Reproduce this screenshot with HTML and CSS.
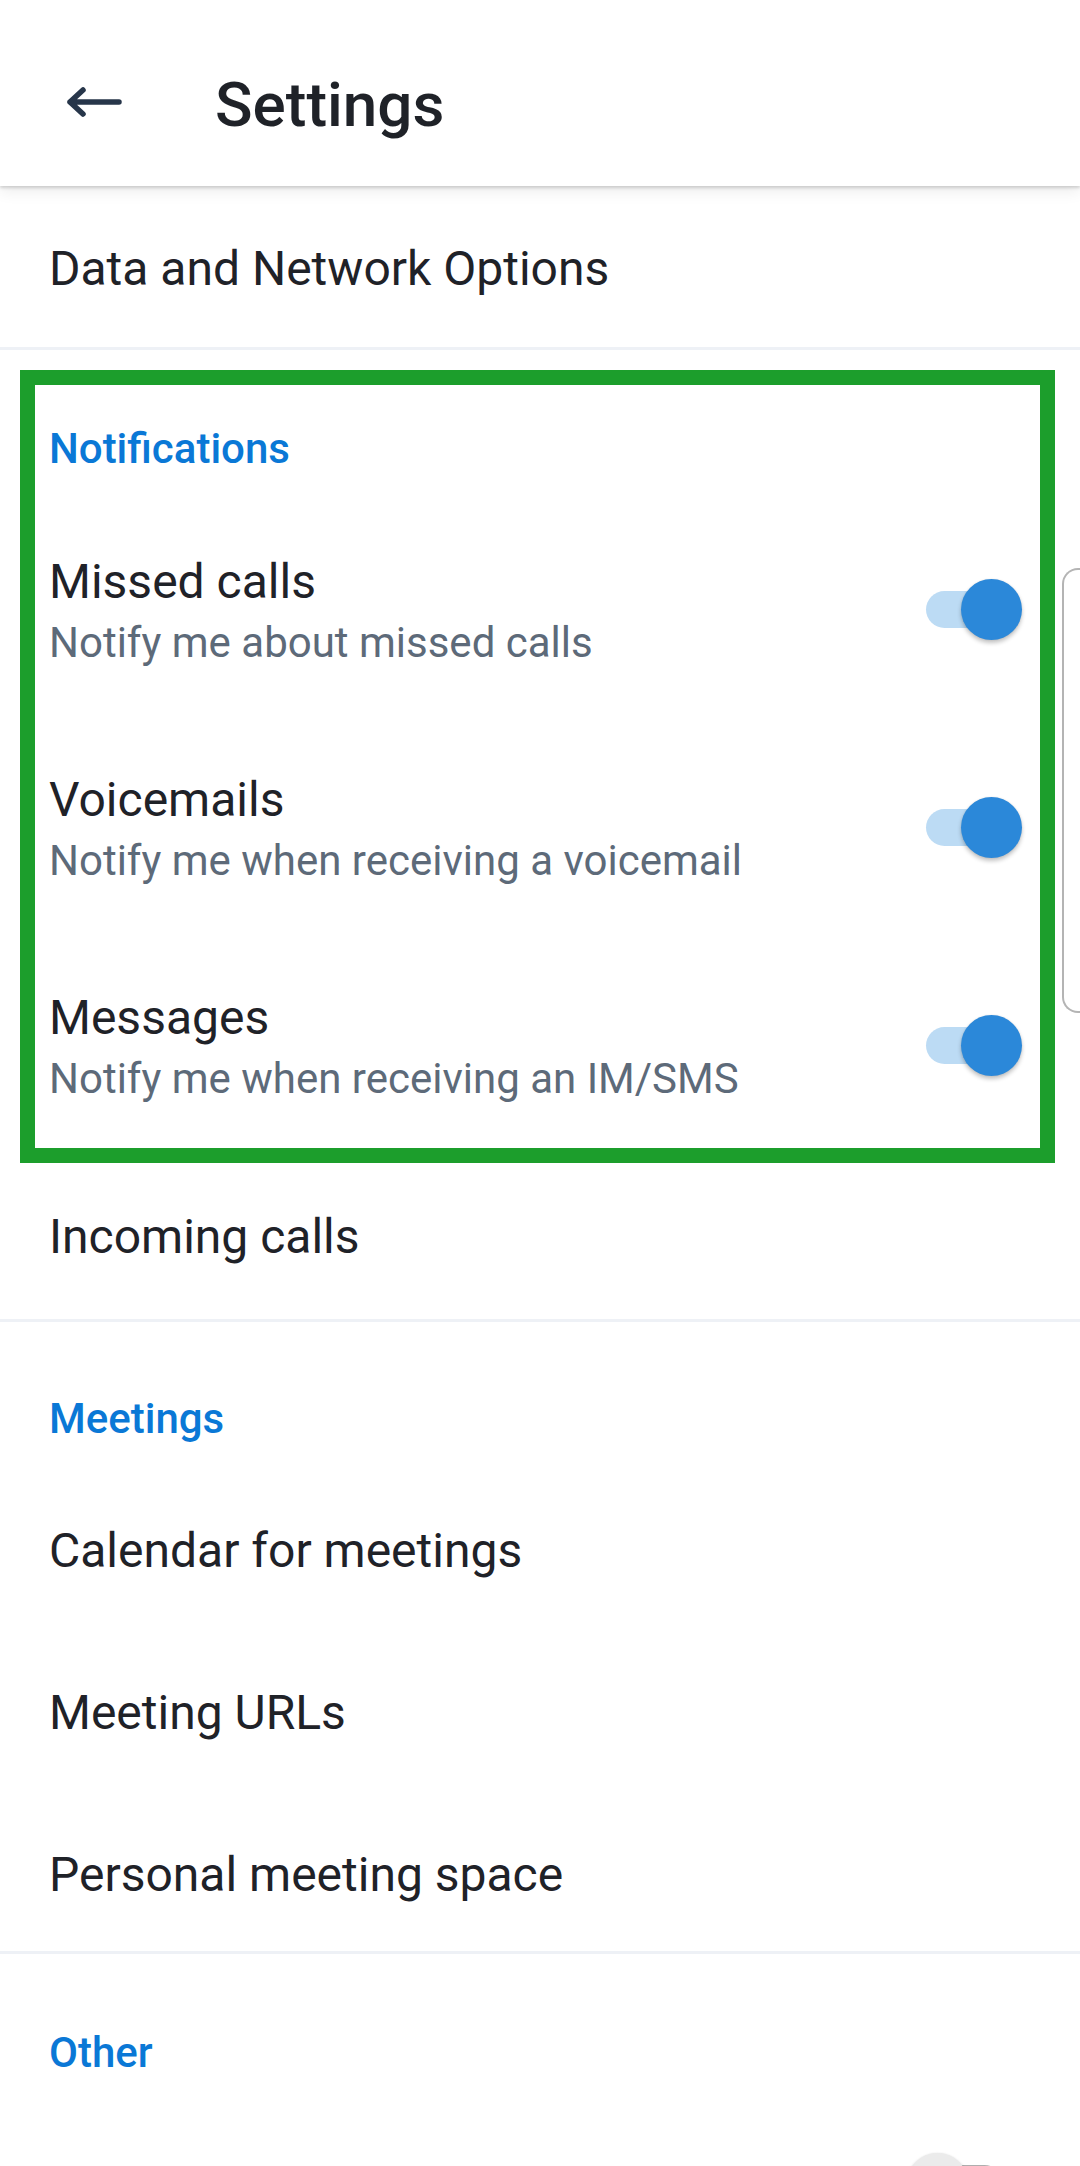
FILE: index.html
```html
<!DOCTYPE html>
<html lang="en">
<head>
<meta charset="utf-8">
<title>Settings</title>
<link rel="stylesheet" href="styles.css">
</head>
<body>
<div class="screen">
  <header class="appbar">
    <svg class="back" width="64" height="40" viewBox="0 0 64 40" aria-hidden="true">
      <path d="M9 20 H58 M22 8 L9 20 L22 32" fill="none" stroke="#27364a" stroke-width="5.5" stroke-linecap="round" stroke-linejoin="round"/>
    </svg>
    <h1 class="title">Settings</h1>
  </header>

  <div class="item item-data divided">Data and Network Options</div>

  <section class="highlight">
    <div class="label label-notif">Notifications</div>
    <div class="toggle-row">
      <div class="texts">
        <div class="t-title">Missed calls</div>
        <div class="t-sub">Notify me about missed calls</div>
      </div>
      <div class="switch on"><span class="track"></span><span class="knob"></span></div>
    </div>
    <div class="toggle-row">
      <div class="texts">
        <div class="t-title">Voicemails</div>
        <div class="t-sub">Notify me when receiving a voicemail</div>
      </div>
      <div class="switch on"><span class="track"></span><span class="knob"></span></div>
    </div>
    <div class="toggle-row last">
      <div class="texts">
        <div class="t-title">Messages</div>
        <div class="t-sub">Notify me when receiving an IM/SMS</div>
      </div>
      <div class="switch on"><span class="track"></span><span class="knob"></span></div>
    </div>
  </section>

  <div class="item item-incoming divided">Incoming calls</div>

  <div class="label label-meet">Meetings</div>
  <div class="item item-list">Calendar for meetings</div>
  <div class="item item-list">Meeting URLs</div>
  <div class="item item-list item-list-last divided">Personal meeting space</div>

  <div class="label label-other">Other</div>
  <div class="bottom-row">
    <div class="switch off"><span class="track"></span><span class="knob"></span></div>
  </div>

  <div class="edge-panel"></div>
</div>
</body>
</html>
```

FILE: styles.css
```css
* { box-sizing: border-box; }

html, body {
  margin: 0;
  padding: 0;
  background: #ffffff;
}

body {
  font-family: Roboto, "Noto Sans", "Liberation Sans", sans-serif;
  color: #1f2228;
}

.screen {
  position: relative;
  width: 1080px;
  height: 2166px;
  overflow: hidden;
  background: #ffffff;
}

/* App bar */
.appbar {
  position: relative;
  z-index: 2;
  height: 186px;
  display: flex;
  align-items: flex-start;
  background: #ffffff;
  box-shadow: 0 2px 3px rgba(0, 0, 0, 0.16), 0 6px 14px rgba(0, 0, 0, 0.07);
}

.back {
  display: block;
  margin: 82px 0 0 61px;
  flex: none;
}

.title {
  margin: 69px 0 0 90px;
  font-size: 62px;
  line-height: 72px;
  font-weight: 500;
  color: #1f2228;
}

/* Plain items */
.item {
  font-size: 48px;
  line-height: 56px;
  padding-left: 49px;
  color: #1f2228;
}

.divided {
  border-bottom: 3px solid #eef1f6;
}

.item-data {
  padding-top: 54.6px;
  padding-bottom: 50.4px;
}

.item-incoming {
  padding-top: 45.6px;
  padding-bottom: 54px;
}

.item-list {
  padding-top: 61px;
  padding-bottom: 45px;
}

.item-list-last {
  padding-bottom: 48px;
}

/* Section labels */
.label {
  font-size: 42px;
  line-height: 48px;
  font-weight: 500;
  color: #0a78d6;
  padding-left: 49px;
}

.label-notif {
  padding-left: 0;
  padding-top: 40.3px;
  padding-bottom: 27.3px;
}

.label-meet {
  padding-top: 73.3px;
  padding-bottom: 18.7px;
}

.label-other {
  padding-top: 75.6px;
}

/* Highlighted block */
.highlight {
  margin: 20px 25px 0 20px;
  border: 15px solid #1c9e2c;
  padding: 0 18px 0 14px;
}

.toggle-row {
  display: flex;
  align-items: center;
  justify-content: space-between;
  padding: 53px 0;
}

.toggle-row.last {
  padding-bottom: 46.4px;
}

.t-title {
  font-size: 48px;
  line-height: 56px;
  color: #1f2228;
}

.t-sub {
  margin-top: 9px;
  font-size: 42px;
  line-height: 47px;
  color: #5d6a79;
}

/* Switch */
.switch {
  position: relative;
  flex: none;
  width: 115px;
  height: 61px;
}

.switch .track {
  position: absolute;
  left: 19px;
  top: 12px;
  width: 77px;
  height: 37px;
  border-radius: 19px;
}

.switch .knob {
  position: absolute;
  top: 0;
  width: 61px;
  height: 61px;
  border-radius: 50%;
  box-shadow: 0 3px 4px rgba(0, 0, 0, 0.24), 0 0 2px rgba(0, 0, 0, 0.08);
}

.switch.on .track { background: #bcdbf4; }
.switch.on .knob { left: 54px; background: #2b88d9; }

.switch.off .track { background: #aeaeae; }
.switch.off .knob { left: 0; background: #ebebeb; }

.bottom-row {
  display: flex;
  justify-content: flex-end;
  padding: 75.4px 58px 0 0;
}

/* Partially visible side panel at the right edge */
.edge-panel {
  position: absolute;
  left: 1062px;
  top: 568px;
  width: 40px;
  height: 445px;
  border: 2px solid #b4b4b4;
  border-right: none;
  border-radius: 16px 0 0 16px;
}
```
